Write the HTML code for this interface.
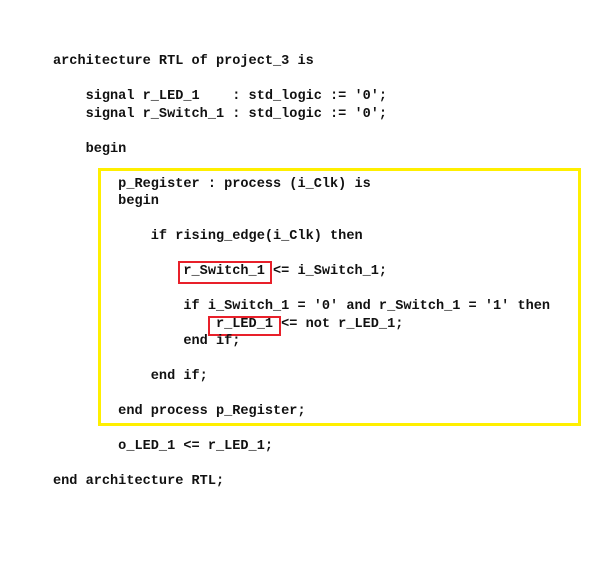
<!DOCTYPE html>
<html><head><meta charset="utf-8"><style>
html,body{margin:0;padding:0;background:#fff;width:614px;height:561px;overflow:hidden;position:relative}
pre{position:absolute;left:53px;top:53px;margin:0;font-family:"Liberation Mono",monospace;font-weight:bold;font-size:13.58px;line-height:17.5px;color:#111;letter-spacing:0}
.y{position:absolute;left:98px;top:168px;width:477px;height:252px;border:3.5px solid #ffef00}
.r{position:absolute;border:2.5px solid #e8202a}
</style></head><body>
<div class="y"></div>
<div class="r" style="left:178px;top:261px;width:90px;height:19px"></div>
<div class="r" style="left:208px;top:316px;width:69px;height:16px"></div>
<pre>architecture RTL of project_3 is

    signal r_LED_1    : std_logic := '0';
    signal r_Switch_1 : std_logic := '0';

    begin

        p_Register : process (i_Clk) is
        begin

            if rising_edge(i_Clk) then

                r_Switch_1 &lt;= i_Switch_1;

                if i_Switch_1 = '0' and r_Switch_1 = '1' then
                    r_LED_1 &lt;= not r_LED_1;
                end if;

            end if;

        end process p_Register;

        o_LED_1 &lt;= r_LED_1;

end architecture RTL;</pre>
</body></html>
